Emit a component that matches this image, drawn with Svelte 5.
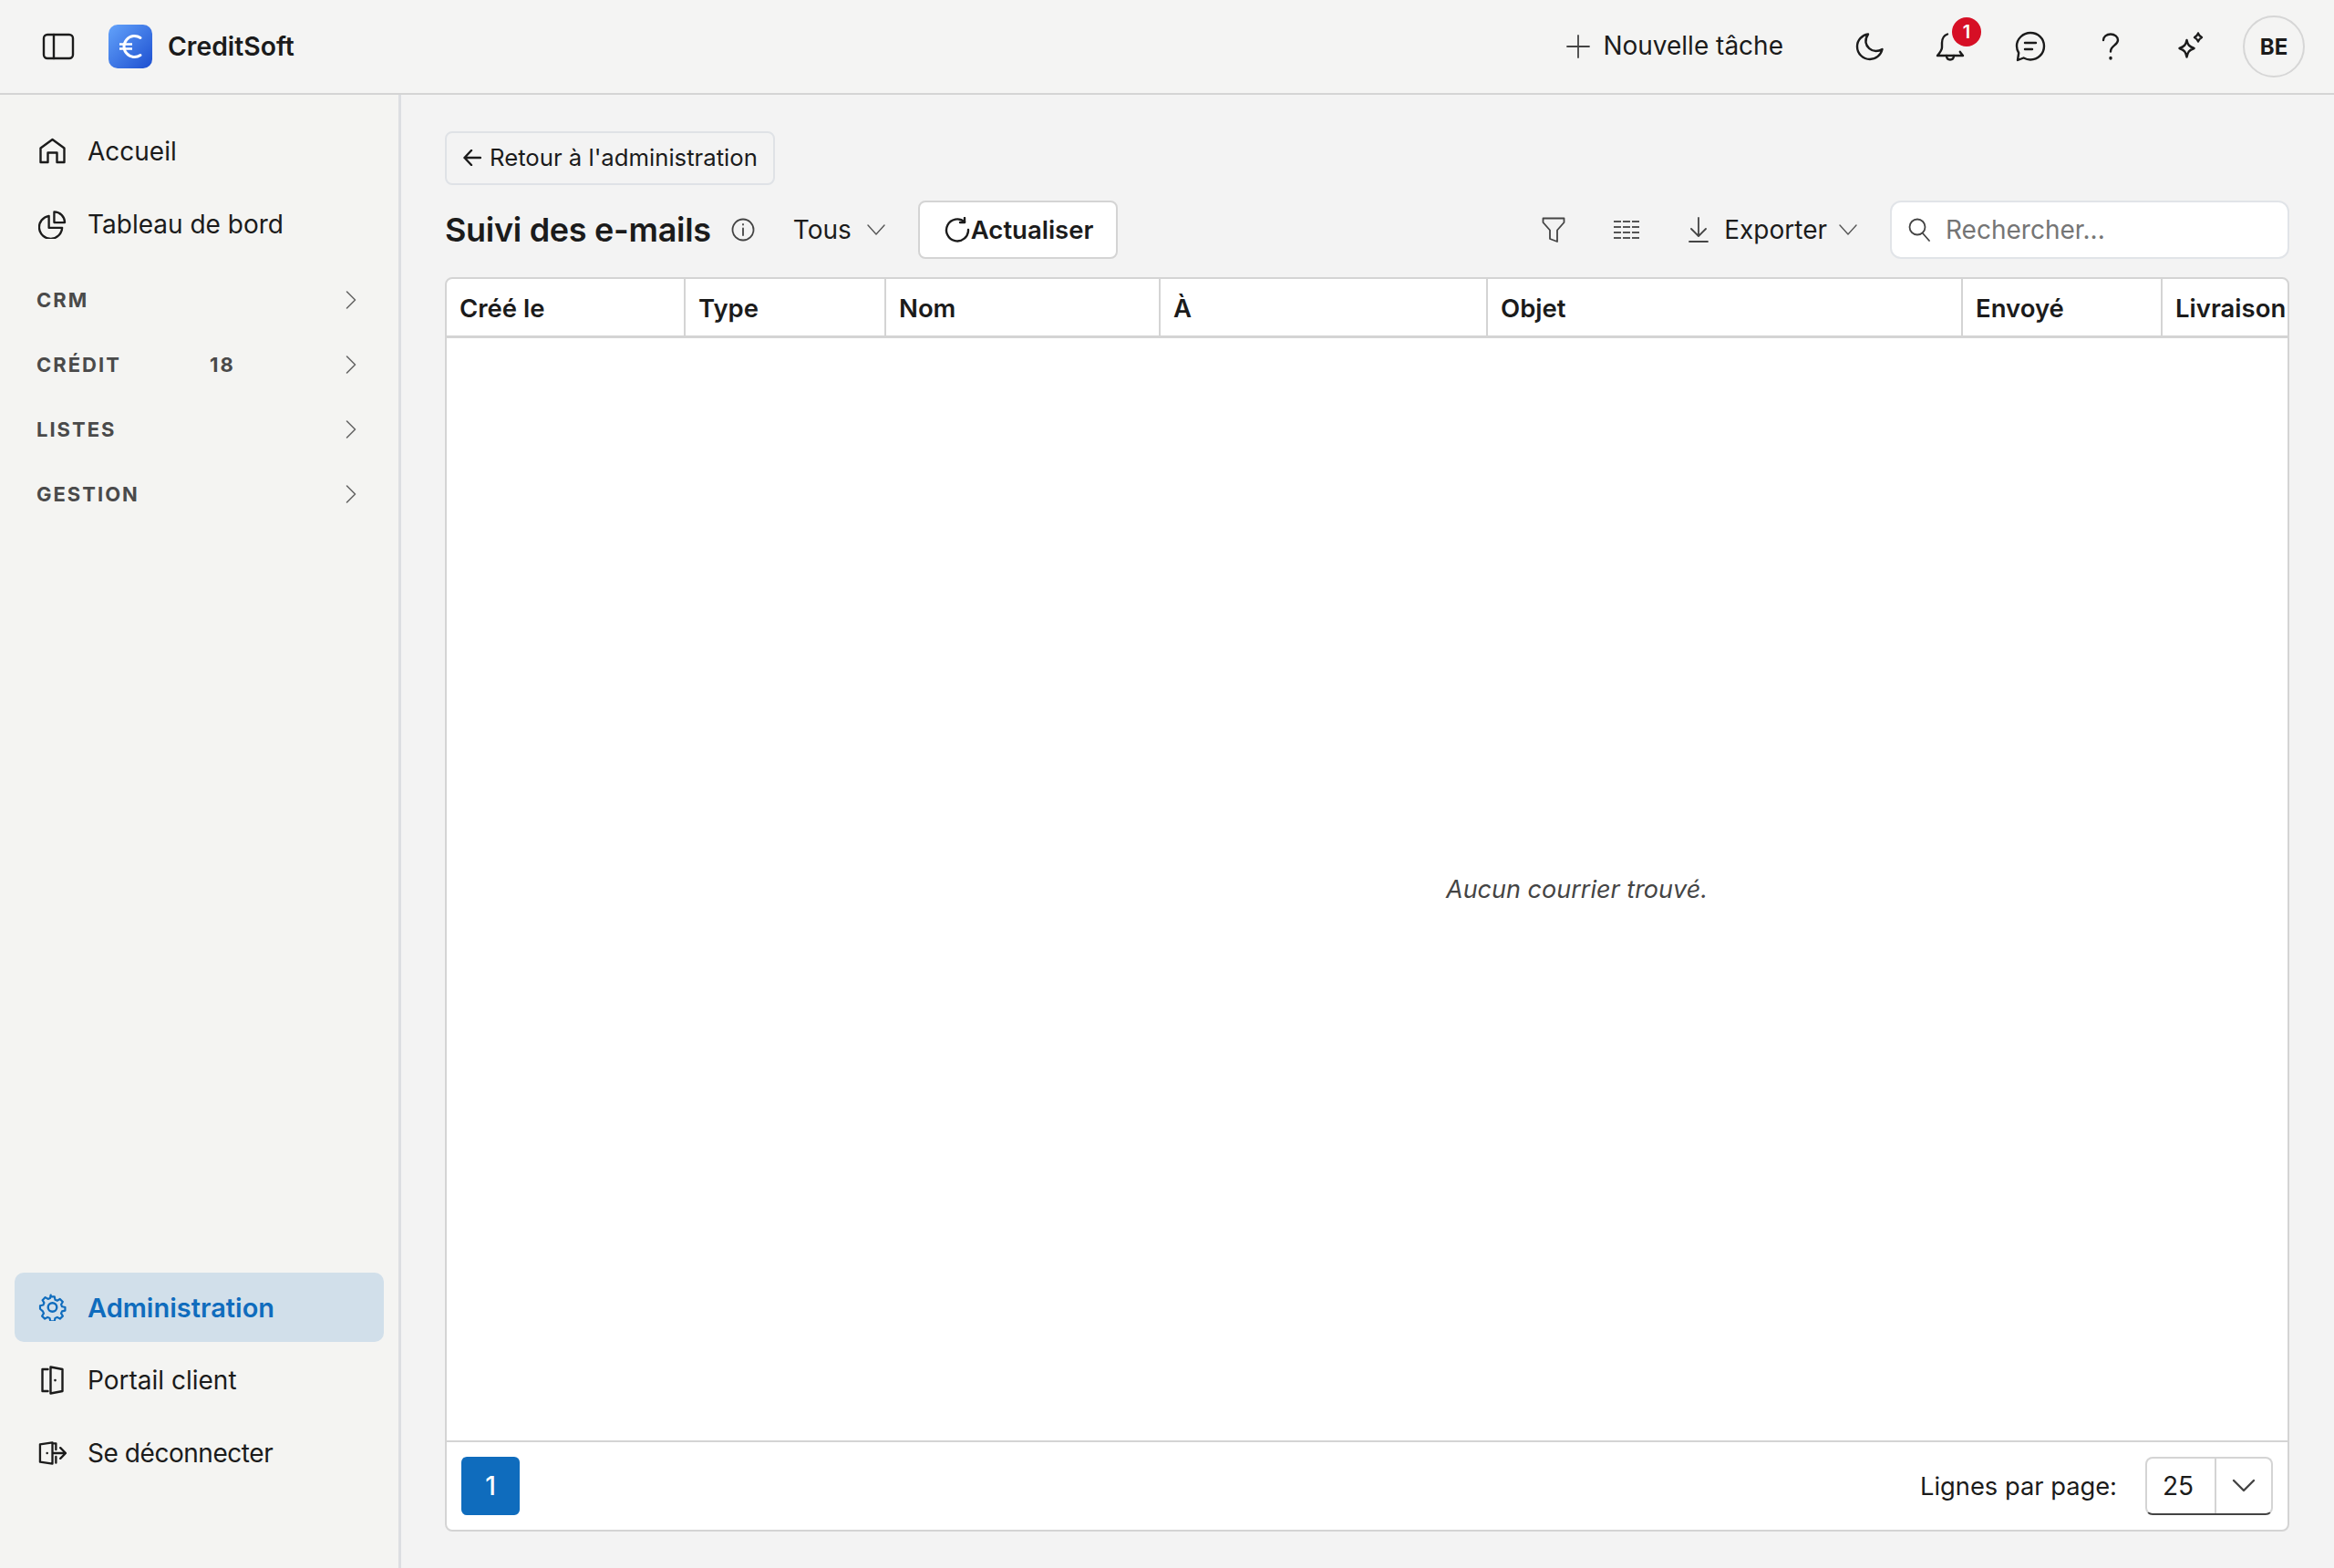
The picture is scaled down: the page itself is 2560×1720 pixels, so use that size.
<script lang="ts">
  const sections = [
    { label: 'CRM' },
    { label: 'CRÉDIT', count: 18 },
    { label: 'LISTES' },
    { label: 'GESTION' },
  ];
  const columns = ['Créé le', 'Type', 'Nom', 'À', 'Objet', 'Envoyé', 'Livraison'];
</script>

<div class="app">
  <header class="topbar">
    <div class="brand">
      <button class="menu-toggle" aria-label="Menu">
        <svg class="ic" width="36" height="30" viewBox="0 0 36 30"><rect x="2" y="2" width="32" height="26" rx="4" /><path d="M13 2v26" /></svg>
      </button>
      <span class="logo">
        <svg width="30" height="30" viewBox="0 0 30 30" fill="none" stroke="#fff" stroke-width="3"><path d="M26 5.500A11.500 11.500 0 1 0 26 24.500" stroke-linecap="round" /><path d="M3 12.500h14M3 17.500h14" stroke-width="2.500" /></svg>
      </span>
      <span class="brand-name">CreditSoft</span>
    </div>
    <div class="top-actions">
      <button class="new-task">
        <svg class="ic thin" width="26" height="26" viewBox="0 0 26 26"><path d="M13 1v24M1 13h24" /></svg>
        <span>Nouvelle tâche</span>
      </button>
      <div class="icon-row">
        <button class="icon-btn" aria-label="Thème">
          <svg class="ic" width="32" height="32" viewBox="0 0 32 32"><path d="M14 2.500c-2 3-3 5.500-2.500 9 .7 5 5.500 9.500 11 9.500 2.500 0 5-.7 7-2-1.500 6.500-7 11-13.500 11C8.500 30 2 24 2 16 2 9 7.500 3.300 14 2.500Z" /></svg>
        </button>
        <button class="icon-btn" aria-label="Notifications">
          <svg class="ic" width="34" height="34" viewBox="0 0 34 34"><path d="M14 3.500C10 5 8 8.500 8 13v5c0 3-2 5.500-5 9h28c-1.500-1.800-2.500-3-3.200-4.200" /><path d="M13 27c0 3 1.800 4.500 4 4.500s4-1.500 4-4.500" /></svg>
          <span class="badge">1</span>
        </button>
        <button class="icon-btn" aria-label="Messages">
          <svg class="ic" width="34" height="34" viewBox="0 0 34 34"><path d="M17 2C9 2 2 8.500 2 16.500c0 3 .9 5.500 2.200 7.500L3 32l6.500-2.500c2.300 1.200 5 2 7.500 2 8.300 0 15-6.500 15-15S25.300 2 17 2Z" /><path d="M11 13h12M11 20h8" /></svg>
        </button>
        <button class="icon-btn" aria-label="Aide">
          <svg class="ic" width="20" height="30" viewBox="0 0 20 30"><path d="M2 8c0-3.500 3.500-6.500 8-6.500s8 3 8 6.500c0 5.500-8 6-8 12.500" /><path d="M10 27.500v.5" stroke-width="3.400" /></svg>
        </button>
        <button class="icon-btn" aria-label="Assistant">
          <svg class="ic" width="32" height="32" viewBox="0 0 32 32"><path d="M11.500 9c1 5 2.500 7 8 9-5.500 2-7 4-8 9.500-1-5.500-2.500-7.500-8-9.500 5.500-2 7-4 8-9Z" /><path d="M24 1.500c.7 2.300 1.500 3 4 4.500-2.500 1.500-3.300 2.200-4 4.500-.7-2.300-1.500-3-4-4.500 2.500-1.500 3.300-2.200 4-4.500Z" /></svg>
        </button>
      </div>
      <span class="avatar">BE</span>
    </div>
  </header>

  <div class="body">
    <nav class="sidebar">
      <div class="nav-group">
        <a class="nav-item">
          <svg class="ic" width="30" height="30" viewBox="0 0 30 30"><path d="M2 27V11.500L15 2l13 9.500V27h-8V16.500H10V27H2Z" /></svg>
          Accueil
        </a>
        <a class="nav-item">
          <svg class="ic" width="32" height="32" viewBox="0 0 32 32"><path d="M12 6.500A13 13 0 1 0 27 20H12V6.500Z" /><path d="M18 2a12 12 0 0 1 12 12H18V2Z" /></svg>
          Tableau de bord
        </a>
        <div class="sections">
          {#each sections as section}
            <div class="section">
              <span class="section-label">{section.label}</span>
              {#if section.count}<span class="section-count">{section.count}</span>{/if}
              <svg class="ic chev" width="12" height="22" viewBox="0 0 12 22"><path d="M1.500 2l9 9-9 9" /></svg>
            </div>
          {/each}
        </div>
      </div>
      <div class="nav-group">
        <a class="nav-item active">
          <svg class="ic" width="30" height="30" viewBox="0 0 30 30"><path d="M12.500 2h5l.8 3.800 2.600 1.100 3.300-2 3.400 3.400-2 3.300 1.100 2.600 3.800.8v4l-3.800.8-1.100 2.600 2 3.300-3.400 3.400-3.300-2-2.600 1.100-.8 3.800h-5l-.8-3.800-2.600-1.100-3.300 2-3.400-3.400 2-3.300-1.100-2.600L0 17v-4l3.800-.8 1.100-2.600-2-3.300 3.400-3.400 3.300 2 2.600-1.100.8-3.800Z" transform="translate(1.500 1.500) scale(.9)" /><circle cx="15" cy="15" r="4.800" /></svg>
          Administration
        </a>
        <a class="nav-item">
          <svg class="ic door" width="26" height="32" viewBox="0 0 26 32"><path d="M8 4H2v24h6" /><path d="M11 1.500 24 4v24l-13 2.500v-29Z" /><path d="M16 16v.1" stroke-width="2.600" /></svg>
          Portail client
        </a>
        <a class="nav-item logout">
          <svg class="ic door" width="32" height="26" viewBox="0 0 32 26"><path d="M16 1 2 3v20l14 2V1Z" /><path d="M17 13h14M25 7l6 6-6 6M17 2h3M20 2v7M20 17v7" /><path d="M10 13v.1" stroke-width="2.600" /></svg>
          Se déconnecter
        </a>
      </div>
    </nav>

    <main class="content">
      <a class="back">
        <svg class="ic" width="20" height="18" viewBox="0 0 20 18"><path d="M9 1 1.500 9 9 17M1.500 9H19" /></svg>
        Retour à l'administration
      </a>

      <div class="toolbar">
        <div class="toolbar-left">
          <h1>Suivi des e-mails</h1>
          <svg class="ic thin info" width="26" height="26" viewBox="0 0 26 26"><circle cx="13" cy="13" r="11.500" /><path d="M13 11.500V19M13 7v.6" /></svg>
          <button class="plain tous">Tous
            <svg class="ic hair" width="20" height="12" viewBox="0 0 20 12"><path d="m1 1 9 10 9-10" /></svg>
          </button>
          <button class="refresh">
            <svg class="ic" width="28" height="28" viewBox="0 0 28 28"><path d="M22 5.500A12 12 0 1 0 26 14" /><path d="M22 1v5h-5" /></svg>Actualiser
          </button>
        </div>
        <div class="toolbar-right">
          <svg class="ic thin filter" width="26" height="28" viewBox="0 0 26 28"><path d="M1.500 1.500h23v4.500L17 14.500V27l-8-3v-9.500L1.500 6V1.500Z" /></svg>
          <svg class="grid-icon" width="28" height="20" viewBox="0 0 28 20"><path d="M0 1h28M0 7h28M0 13h28M0 19h28" stroke="#555" stroke-width="2" stroke-dasharray="8 2" /></svg>
          <button class="plain export">
            <svg class="ic thin" width="22" height="28" viewBox="0 0 22 28"><path d="M11 1v19M3 13l8 8 8-8M1 27h20" /></svg>
            <span>Exporter</span>
            <svg class="ic hair export-chev" width="20" height="12" viewBox="0 0 20 12"><path d="m1 1 9 10 9-10" /></svg>
          </button>
          <label class="search">
            <svg class="ic thin" width="24" height="26" viewBox="0 0 24 26"><circle cx="10" cy="10" r="8.500" /><path d="m16 17 7 8" /></svg>
            <input placeholder="Rechercher..." />
          </label>
        </div>
      </div>

      <section class="table">
        <div class="thead">
          {#each columns as col}<div class="th">{col}</div>{/each}
        </div>
        <div class="tbody">Aucun courrier trouvé.</div>
        <div class="tfoot">
          <button class="page">1</button>
          <div class="per-page">
            <span>Lignes par page:</span>
            <div class="select">
              <span class="select-value">25</span>
              <span class="select-arrow">
                <svg class="ic" width="26" height="16" viewBox="0 0 26 16"><path d="m2 2 11 11L24 2" /></svg>
              </span>
            </div>
          </div>
        </div>
      </section>
    </main>
  </div>
</div>

<style>
  :global(body) {
    margin: 0;
    background: #f3f3f3;
    font-family: Inter, 'Liberation Sans', sans-serif;
    color: #1b1b1b;
  }
  button, input {
    font: inherit;
    color: inherit;
    background: none;
    border: 0;
    padding: 0;
  }
  .ic {
    fill: none;
    stroke: currentColor;
    stroke-width: 2.400;
    stroke-linecap: round;
    stroke-linejoin: round;
    flex-shrink: 0;
  }
  .ic.thin {
    stroke-width: 1.800;
    color: #444;
  }
  .ic.hair {
    stroke-width: 1.400;
    color: #555;
  }
  .app {
    height: 1720px;
    display: flex;
    flex-direction: column;
  }
  .topbar {
    height: 102px;
    box-sizing: content-box;
    border-bottom: 2px solid #d4d4d4;
    display: flex;
    align-items: center;
    justify-content: space-between;
    padding-right: 32px;
    background: #f4f4f3;
  }
  .brand {
    display: flex;
    align-items: center;
    padding-left: 46px;
  }
  .menu-toggle {
    display: flex;
    margin-right: 37px;
  }
  .logo {
    width: 48px;
    height: 48px;
    border-radius: 10px;
    background: linear-gradient(135deg, #63a3fb, #1d4fd0);
    display: flex;
    align-items: center;
    justify-content: center;
    margin-right: 17px;
  }
  .brand-name {
    font-size: 28.300px;
    font-weight: 600;
  }
  .top-actions {
    display: flex;
    align-items: center;
  }
  .new-task {
    display: flex;
    align-items: center;
    gap: 14px;
    font-size: 28px;
    margin-right: 51px;
  }
  .new-task span {
    padding-bottom: 3px;
  }
  .icon-row {
    display: flex;
    margin-right: 13px;
  }
  .icon-btn {
    width: 88px;
    height: 66px;
    display: flex;
    align-items: center;
    justify-content: center;
    position: relative;
  }
  .badge {
    position: absolute;
    top: 1px;
    left: 46px;
    width: 32px;
    height: 32px;
    border-radius: 50%;
    background: #d60f25;
    color: #fff;
    font-size: 20px;
    font-weight: 600;
    line-height: 32px;
    text-align: center;
  }
  .avatar {
    width: 64px;
    height: 64px;
    border: 2px solid #d6d6d6;
    border-radius: 50%;
    display: flex;
    align-items: center;
    justify-content: center;
    font-size: 24px;
    font-weight: 700;
  }
  .body {
    flex: 1;
    display: flex;
    min-height: 0;
  }
  .sidebar {
    border-right: 3px solid #dcdee2;
    background: #f4f4f2;
    display: flex;
    flex-direction: column;
    justify-content: space-between;
    padding: 24px 16px 84px;
    box-sizing: content-box;
    width: 405px;
  }
  .nav-item {
    height: 76px;
    margin-bottom: 4px;
    border-radius: 10px;
    display: flex;
    align-items: center;
    padding-left: 26px;
    gap: 23px;
    font-size: 28px;
  }
  .nav-item svg {
    width: 31px;
  }
  .nav-item.active {
    background: #d1dfea;
    color: #0f6cbd;
    font-size: 29px;
    font-weight: 600;
  }
  .nav-item.logout {
    letter-spacing: -0.450px;
  }
  .sections {
    margin-top: 9px;
  }
  .section {
    height: 71px;
    display: flex;
    align-items: center;
    padding-left: 24px;
    position: relative;
    color: #4a4a4a;
    font-size: 22px;
    font-weight: 700;
    letter-spacing: 2px;
  }
  .section-count {
    position: absolute;
    left: 214px;
    letter-spacing: 2px;
  }
  .chev {
    position: absolute;
    right: 30px;
    stroke-width: 1.600;
    color: #666;
  }
  .content {
    flex: 1;
    min-width: 0;
    padding: 40px 49px 40px 48px;
    display: flex;
    flex-direction: column;
    background: #f3f3f3;
  }
  .back {
    align-self: flex-start;
    height: 59px;
    box-sizing: border-box;
    border: 2px solid #dfe2e6;
    border-radius: 8px;
    display: flex;
    align-items: center;
    gap: 9px;
    padding: 0 17px 2px 18px;
    font-size: 25.700px;
  }
  .toolbar {
    height: 64px;
    margin: 17px 0 20px;
    display: flex;
    align-items: center;
    justify-content: space-between;
  }
  .toolbar-left, .toolbar-right {
    display: flex;
    align-items: center;
  }
  h1 {
    margin: 0;
    font-size: 36px;
    font-weight: 600;
    letter-spacing: -0.300px;
  }
  .info {
    margin: 0 42px 0 22px;
  }
  .plain {
    display: flex;
    align-items: center;
    font-size: 28px;
  }
  .tous {
    gap: 17px;
    margin-right: 36px;
  }
  .refresh {
    height: 64px;
    box-sizing: border-box;
    padding: 0 25px 0 27px;
    background: #fff;
    border: 2px solid #d4d4d4;
    border-radius: 8px;
    display: flex;
    align-items: center;
    gap: 1px;
    font-size: 27.500px;
    font-weight: 600;
  }
  .filter {
    margin-right: 53px;
  }
  .grid-icon {
    margin-right: 54px;
  }
  .export {
    gap: 17px;
    margin-right: 36px;
  }
  .export-chev {
    margin-left: -4px;
  }
  .search {
    width: 438px;
    height: 64px;
    box-sizing: border-box;
    background: #fff;
    border: 2px solid #e1e4e8;
    border-radius: 12px;
    display: flex;
    align-items: center;
    gap: 17px;
    padding-left: 18px;
  }
  .search input {
    flex: 1;
    min-width: 0;
    font-size: 28px;
    outline: 0;
  }
  .search input::placeholder {
    color: #757575;
  }
  .table {
    flex: 1;
    min-height: 0;
    background: #fff;
    border: 2px solid #d4d4d4;
    border-radius: 8px;
    display: flex;
    flex-direction: column;
    overflow: hidden;
  }
  .thead {
    height: 62px;
    flex-shrink: 0;
    box-sizing: content-box;
    border-bottom: 3px solid #d4d4d4;
    display: grid;
    grid-template-columns: 260px 220px 301px 359px 521px 219px 1fr;
  }
  .th {
    display: flex;
    align-items: center;
    padding: 2px 0 0 14px;
    font-size: 27.500px;
    font-weight: 600;
    white-space: nowrap;
    overflow: hidden;
    border-left: 2px solid #d4d4d4;
  }
  .th:first-child {
    border-left: 0;
  }
  .tbody {
    flex: 1;
    padding-left: 460px;
    display: flex;
    align-items: center;
    justify-content: center;
    font-size: 27px;
    font-style: italic;
    color: #444;
  }
  .tfoot {
    height: 96px;
    flex-shrink: 0;
    border-top: 2px solid #d4d4d4;
    display: flex;
    align-items: center;
    justify-content: space-between;
    padding: 0 16px;
  }
  .page {
    width: 64px;
    height: 64px;
    border-radius: 6px;
    background: #0f6cbd;
    color: #fff;
    font-size: 28px;
    font-weight: 500;
  }
  .per-page {
    display: flex;
    align-items: center;
    gap: 31px;
    font-size: 27.300px;
  }
  .select {
    width: 140px;
    height: 64px;
    box-sizing: border-box;
    border: 2px solid #d4d4d4;
    border-bottom-color: #444;
    border-radius: 8px;
    display: flex;
    align-items: stretch;
  }
  .select-value {
    width: 74px;
    box-sizing: border-box;
    padding-right: 6px;
    display: flex;
    align-items: center;
    justify-content: center;
    font-size: 28px;
  }
  .select-arrow {
    flex: 1;
    border-left: 2px solid #d4d4d4;
    display: flex;
    align-items: center;
    justify-content: center;
    color: #444;
  }
</style>
